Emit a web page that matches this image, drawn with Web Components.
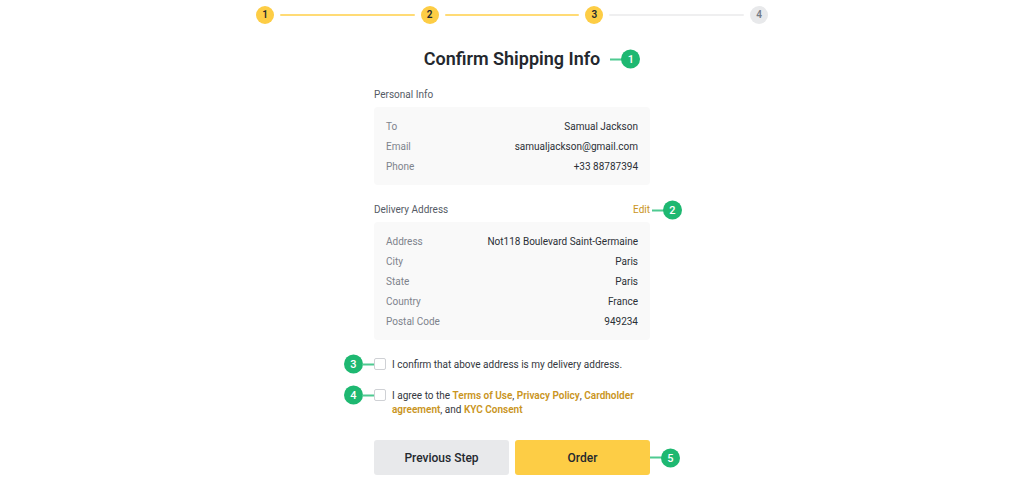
<!DOCTYPE html>
<html lang="en">
<head>
<meta charset="utf-8">
<meta name="viewport" content="width=device-width, initial-scale=1">
<title>Confirm Shipping Info</title>
<style>
  body {
    margin: 0;
    background: #fff;
    color: #24282e;
    font-family: Roboto, "Noto Sans", sans-serif;
    font-size: 10px;
    line-height: 14px;
  }
</style>
</head>
<body>
<shipping-page></shipping-page>

<script>
const define = (name, html, setup) => {
  const template = document.createElement('template');
  template.innerHTML = html;
  customElements.define(name, class extends HTMLElement {
    constructor() {
      super();
      this.attachShadow({ mode: 'open' }).append(template.content.cloneNode(true));
    }
    connectedCallback() {
      if (setup && !this.ready) { this.ready = true; setup(this, this.shadowRoot); }
    }
  });
};

/* Progress bar: total and current step come from attributes */
define('step-progress', `
  <style>
    :host { display: block; }
    ol { display: flex; align-items: center; gap: 6px; margin: 0; padding: 0; list-style: none; }
    li { display: flex; align-items: center; gap: 6px; }
    li:not(:first-child) { flex: 1; }
    li:not(:first-child)::before { content: ""; flex: 1; height: 2px; border-radius: 1px; background: #ffdb75; }
    span { display: grid; place-items: center; width: 18px; height: 18px; border-radius: 50%;
      background: #fdcd45; font-size: 10px; font-weight: 600; line-height: 18px; }
    li.todo::before { background: #efeff0; }
    li.todo span { background: #e8e9eb; color: #747b87; }
  </style>
  <ol></ol>`, (host, root) => {
  const current = +host.getAttribute('current');
  for (let i = 1; i <= +host.getAttribute('total'); i++) {
    const li = document.createElement('li');
    if (i > current) li.className = 'todo';
    if (i === current) li.setAttribute('aria-current', 'step');
    li.innerHTML = `<span>${i}</span>`;
    root.querySelector('ol').append(li);
  }
});

/* Numbered callout that hangs beside the positioned box holding it */
define('call-out', `
  <style>
    :host { position: absolute; top: 50%; left: 100%; transform: translateY(-50%);
      display: flex; align-items: center; color: #fff; font-size: 11px; font-weight: 500; line-height: 19px; }
    :host([gap]) { padding-left: var(--gap, 0); }
    :host([side="left"]) { left: auto; right: 100%; flex-direction: row-reverse; }
    i { width: 12px; height: 2px; margin: 0 -1px 0 0; background: #4fca91; }
    :host([side="left"]) i { margin: 0 0 0 -1px; }
    b { display: grid; place-items: center; width: 19px; height: 19px; border-radius: 50%; background: #1eb871; font-weight: 500; }
  </style>
  <i></i><b><slot></slot></b>`);

/* Titled group with a grey card below */
define('info-section', `
  <style>
    :host { display: block; }
    header { display: flex; justify-content: space-between; color: #555b65; line-height: 16px; margin-bottom: 4px; }
    h2 { margin: 0; font: inherit; }
    .card { padding: 10px 12px 8px; border-radius: 4px; background: #f9f9f9; }
  </style>
  <header><h2><slot name="heading"></slot></h2><slot name="action"></slot></header>
  <div class="card"><slot></slot></div>`);

/* Label and value pairs, read from the "rows" attribute */
define('info-table', `
  <style>
    :host { display: block; }
    table { width: 100%; border-collapse: collapse; }
    th, td { height: 20px; padding: 0; line-height: 20px; }
    th { text-align: left; font-weight: 400; color: #7e838c; }
    td { text-align: right; color: #2b3036; }
  </style>
  <table><tbody></tbody></table>`, (host, root) => {
  for (const [name, value] of JSON.parse(host.getAttribute('rows'))) {
    const row = root.querySelector('tbody').insertRow();
    const th = document.createElement('th');
    th.scope = 'row';
    th.textContent = name;
    row.append(th);
    row.insertCell().textContent = value;
  }
});

define('check-line', `
  <style>
    :host { display: block; }
    label { display: flex; align-items: flex-start; gap: 6px; color: #333840; }
    .box { position: relative; display: flex; }
    input { appearance: none; width: 12px; height: 12px; margin: 0; border: 1px solid #cfd1d5; border-radius: 2px; background: #fff; }
    input:checked { background: #fdcd45; }
    .text { flex: 1; }
  </style>
  <label><span class="box"><input type="checkbox"><slot name="mark"></slot></span><span class="text"><slot></slot></span></label>`);

define('action-button', `
  <style>
    :host { position: relative; display: block; flex: 1; }
    button { display: block; width: 100%; height: 35px; padding: 0; border: 0; border-radius: 3px;
      background: #e8e9eb; color: #24282e; font: inherit; font-size: 12px; font-weight: 500; }
    :host([primary]) button { background: #fdcd45; }
  </style>
  <button type="button"><slot></slot></button><slot name="mark"></slot>`);

define('shipping-page', `
  <style>
    :host { display: block; padding-top: 6px; }
    step-progress { width: 50%; margin: 0 auto; }
    main { width: 276px; max-width: 100%; margin: 0 auto; padding-top: 23px; }
    .title { position: relative; width: fit-content; margin: 0 auto 16px; --gap: 10px; }
    h1 { margin: 0; font-size: 18px; line-height: 24px; font-weight: 600; }
    info-section { margin-bottom: 17px; }
    .edit { position: relative; --gap: 2px; }
    a { color: #c99421; text-decoration: none; }
    check-line a { font-weight: 600; }
    form { display: grid; gap: 17px; margin: 0; padding-top: 1px; }
    .actions { display: flex; gap: 6px; padding-top: 6px; }
  </style>
  <step-progress total="4" current="3"></step-progress>
  <main>
    <div class="title"><h1>Confirm Shipping Info</h1><call-out gap>1</call-out></div>
    <info-section>
      <span slot="heading">Personal Info</span>
      <info-table rows='[["To","Samual Jackson"],["Email","samualjackson@gmail.com"],["Phone","+33 88787394"]]'></info-table>
    </info-section>
    <info-section>
      <span slot="heading">Delivery Address</span>
      <span slot="action" class="edit"><a href="#edit">Edit</a><call-out gap>2</call-out></span>
      <info-table rows='[["Address","Not118 Boulevard Saint-Germaine"],["City","Paris"],["State","Paris"],["Country","France"],["Postal Code","949234"]]'></info-table>
    </info-section>
    <form>
      <check-line><call-out slot="mark" side="left">3</call-out>I confirm that above address is my delivery address.</check-line>
      <check-line><call-out slot="mark" side="left">4</call-out>I agree to the <a href="#terms">Terms of Use</a>, <a href="#privacy">Privacy Policy</a>, <a href="#cardholder">Cardholder agreement</a>, and <a href="#kyc">KYC Consent</a></check-line>
      <div class="actions">
        <action-button>Previous Step</action-button>
        <action-button primary>Order<call-out slot="mark">5</call-out></action-button>
      </div>
    </form>
  </main>`);
</script>
</body>
</html>
